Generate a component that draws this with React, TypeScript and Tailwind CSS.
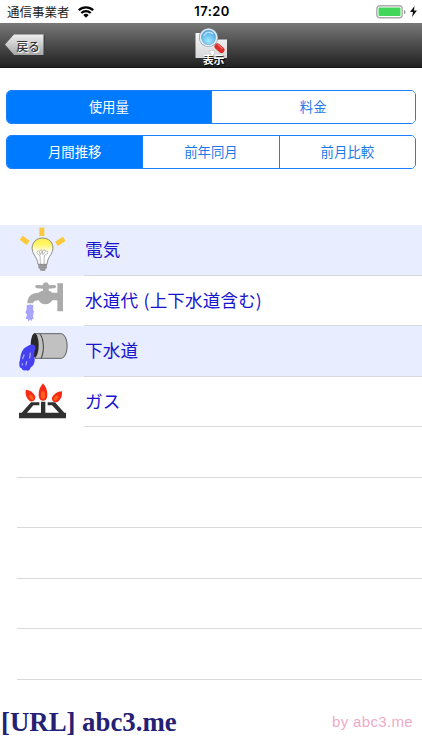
import React, { useState } from 'react';

interface SegmentedProps {
    options: string[];
    selected: number;
    onSelect: (index: number) => void;
}

const SegmentedControl: React.FC<SegmentedProps> = ({ options, selected, onSelect }) => (
    <div className="flex h-[34px] w-full overflow-hidden rounded-[5px] border border-[#1b7ffb]">
        {options.map((option, index) => (
            <button
                key={option}
                onClick={() => onSelect(index)}
                className={`flex-1 pb-[2px] text-[13.4px] leading-[30px] ${index > 0 ? 'border-l border-[#1b7ffb]' : ''} ${selected === index ? 'bg-[#007aff] text-white' : 'bg-white text-[#1b7ae8]'}`}
            >
                {option}
            </button>
        ))}
    </div>
);

const BulbIcon = () => (
    <svg width="70" height="50" viewBox="0 15 210 150" fill="none">
        <defs>
            <linearGradient id="bulb" x1="0" y1="0" x2="0" y2="1">
                <stop offset="0" stopColor="#fff04a" />
                <stop offset="0.25" stopColor="#fff56a" />
                <stop offset="0.55" stopColor="#ffffff" />
            </linearGradient>
        </defs>
        <g fill="#fcc938">
            <rect x="88" y="23" width="15" height="25" />
            <rect x="-13" y="-7.5" width="26" height="15" transform="translate(44 61) rotate(36)" />
            <rect x="-14" y="-7.5" width="28" height="15" transform="translate(151 64) rotate(-32)" />
        </g>
        <path d="M84 133c-1-14-7-21-12-30-15-24 1-49 26-49s40 25 25 49c-6 9-11 16-12 30z" fill="url(#bulb)" stroke="#77776f" strokeWidth="2.5" />
        <path d="M91 132l-1-25-7-5c-5-7 1-12 6-8 3-7 8-5 9 0 2-5 8-6 9 0 5-4 9 3 4 8l-8 5-1 25M88 96l3 8 5-10 3 10 6-9" stroke="#888" strokeWidth="1.8" />
        <path d="M85 133h26v10l-4 4-2 5H92l-3-5-4-4z" fill="#8c8c91" />
        <path d="M85 139h26M88 146h20" stroke="#b8b8bd" strokeWidth="2" />
    </svg>
);

const FaucetIcon = () => (
    <svg width="70" height="50" viewBox="0 10 210 150">
        <path d="M142 32h17v84h-17V83h-15c-3 7-11 12-21 12s-17-5-20-12c-9 0-16 3-17 9H52c0-20 13-32 34-32 3-3 7-5 13-6v-6l-18-1c-7-2-7-9 0-10l17 1c2-12 17-12 19 0l16-1c7 1 7 8 0 10l-17 1v6c5 1 8 3 10 6h16z" fill="#ababab" />
        <path d="M50 96l8 1 2-3 4 3 6 0-1 15 3 4-3 13 2 9-4 1-3 7-4-6-4 7-3-8-6 0 4-13-5-7 4-9z" fill="#a6a3ff" />
        <path d="M61 99l-2 17 3 7-1 10" stroke="#b9b7ff" strokeWidth="1.5" fill="none" />
    </svg>
);

const PipeIcon = () => (
    <svg width="70" height="50" viewBox="0 6 210 150">
        <path d="M74 29h81c22 6 22 68 0 74H76z" fill="#c1c1c2" stroke="#4a4a4d" strokeWidth="2.5" />
        <ellipse cx="74" cy="64" rx="12" ry="36" fill="#292929" />
        <path d="M89 29c14 14 14 59 4 74" stroke="#3a3a3a" strokeWidth="3" fill="none" />
        <path d="M63 62c7-2 14 3 14 9-3 8-4 13-5 24 5 12 1 30-9 34-3 9-10 14-15 9-5 4-11 1-13-5-9-1-8-18-5-25 2-14 4-30 17-38 5-4 10-7 16-8z" fill="#4540f0" />
        <g stroke="#aeb3ff" strokeWidth="3.5" strokeLinecap="round" fill="none">
            <path d="M42 93l-4 11" />
            <path d="M50 113l-2 10" />
            <path d="M61 87l-2 15" />
            <path d="M37 119v4" />
        </g>
    </svg>
);

const BurnerIcon = () => (
    <svg width="70" height="50" viewBox="0 5 210 150">
        <g fill="#f52b16">
            <path d="M0-26C9-15 13-6 13 7 13 19 9 26 0 26S-13 19-13 7C-13-6-9-15 0-26z" transform="translate(99 50)" />
            <path d="M0-23C10-13 13-4 11 9 8 20-8 20-11 9-13-4-10-13 0-23z" transform="translate(61 62) rotate(-36)" />
            <path d="M0-23C10-13 13-4 11 9 8 20-8 20-11 9-13-4-10-13 0-23z" transform="translate(141 65) rotate(40)" />
        </g>
        <g fill="#ff601b">
            <ellipse cx="99" cy="59" rx="6" ry="12" />
            <ellipse cx="64" cy="66" rx="5" ry="9" transform="rotate(-36 64 66)" />
            <ellipse cx="138" cy="68" rx="5" ry="9" transform="rotate(40 138 68)" />
        </g>
        <path d="M27 112h8l28-31h25v9H70l-19 22h42V79h13v33h41l-21-22h-13v-9h22l28 31h5v17H27z" fill="#303030" />
    </svg>
);

const SearchFolderIcon = () => (
    <svg width="36" height="44" viewBox="192 23 36 44">
        <defs>
            <radialGradient id="lens" cx="0.5" cy="0.7" r="0.7">
                <stop offset="0" stopColor="#9fe8ff" />
                <stop offset="1" stopColor="#3c9bdd" />
            </radialGradient>
            <linearGradient id="paper" x1="0" y1="0" x2="0" y2="1">
                <stop offset="0" stopColor="#f7f7f7" />
                <stop offset="1" stopColor="#d6d6d9" />
            </linearGradient>
        </defs>
        <path d="M194.5 33h14l2 6.5h15.5v18.5h-31.5z" fill="url(#paper)" />
        <path d="M208 51l5-1 1 3-3 3z" fill="#fff" stroke="#b9b9b9" strokeWidth="0.6" />
        <path d="M213.5 43.500l3 3" stroke="#d9dce0" strokeWidth="3" />
        <path d="M216.5 46.500l4 3.500" stroke="#db2e29" strokeWidth="6" strokeLinecap="round" />
        <path d="M217 44.500l4 4" stroke="#f36d66" strokeWidth="1.4" strokeLinecap="round" />
        <circle cx="207.5" cy="37.5" r="8.4" fill="url(#lens)" stroke="#7b98b0" strokeWidth="2.4" />
        <circle cx="207.5" cy="37.5" r="8.2" fill="none" stroke="#e4edf4" strokeWidth="1.6" />
        <path d="M203 36c1-4 6-5 9-2" stroke="#b7e1fa" strokeWidth="1.5" fill="none" />
    </svg>
);

const StatusBar = () => (
    <div className="grid h-[23px] grid-cols-3 items-center pl-[7px] pr-[5px] text-black">
        <div className="flex items-center gap-2">
            <span className="text-[12.5px] leading-[23px] text-[#222]">通信事業者</span>
            <svg width="16" height="12" viewBox="0 0 16 12" fill="none" stroke="#000" strokeWidth="2.2">
                <path d="M0.8 4.3a10.2 10.2 0 0 1 14.4 0" />
                <path d="M3.3 7a6.7 6.7 0 0 1 9.4 0" />
                <path d="M5.3 9a3.8 3.8 0 0 1 5.4 0L8 11.8z" fill="#000" stroke="none" />
            </svg>
        </div>
        <span className="text-center font-['Inter'] text-[13px] font-semibold leading-[23px] tracking-[0.4px]">17:20</span>
        <div className="flex items-center justify-end gap-1">
            <svg width="30" height="14" viewBox="0 0 30 14">
                <rect x="0.8" y="0.8" width="25.4" height="12" rx="3" fill="#fff" stroke="#aaa" strokeWidth="1.4" />
                <rect x="2.5" y="2.5" width="22" height="8.6" rx="1" fill="#42d65b" />
                <path d="M28 5c2 0 2 4 0 4z" fill="#999" />
            </svg>
            <svg width="7" height="11" viewBox="0 0 7 11">
                <path d="M4.5 0L0 6h3L2 11l5-6.5H4z" fill="#111" />
            </svg>
        </div>
    </div>
);

const NavBar = () => (
    <header className="grid h-[45px] grid-cols-3 bg-linear-to-b from-[#797979] to-[#222222] border-b border-[#151515]">
        <button className="relative ml-1 mt-[10px] h-[24px] w-[42px]">
            <svg className="absolute inset-0" width="42" height="24" viewBox="0 0 42 24">
                <defs>
                    <linearGradient id="back" x1="0" y1="0" x2="0" y2="1">
                        <stop offset="0" stopColor="#eeeeee" />
                        <stop offset="1" stopColor="#a7a7a7" />
                    </linearGradient>
                </defs>
                <path d="M2 12.5L11 2.5H41V23.5H11z" fill="#333" opacity="0.6" />
                <path d="M1 11.5L10 1.5H39.5V22H10z" fill="url(#back)" />
            </svg>
            <span className="relative block pl-[6px] pt-[2px] text-[11.8px] font-medium leading-[20px] text-[#333] [text-shadow:1px_1px_0_#fff]">戻る</span>
        </button>
        <div className="relative flex justify-center">
            <SearchFolderIcon />
            <span className="absolute left-[62px] top-[29px] text-[10.8px] font-bold leading-[14px] text-white [text-shadow:1px_1px_1px_#000]">表示</span>
        </div>
    </header>
);

const utilities = [
    { label: '電気', icon: <BulbIcon /> },
    { label: '水道代 (上下水道含む)', icon: <FaucetIcon /> },
    { label: '下水道', icon: <PipeIcon /> },
    { label: 'ガス', icon: <BurnerIcon /> },
];

const App: React.FC = () => {
    const [mode, setMode] = useState(0);
    const [period, setPeriod] = useState(0);

    return (
        <div className="flex h-[750px] w-[422px] flex-col overflow-hidden bg-white font-['Noto_Sans_CJK_JP',sans-serif]">
            <StatusBar />
            <NavBar />

            <div className="flex flex-col gap-[11px] px-[6px] pt-[22px]">
                <SegmentedControl options={['使用量', '料金']} selected={mode} onSelect={setMode} />
                <SegmentedControl options={['月間推移', '前年同月', '前月比較']} selected={period} onSelect={setPeriod} />
            </div>

            <ul className="mt-[56px]">
                {utilities.map((item, index) => (
                    <li key={item.label} className={`flex h-[50.5px] pl-[10px] ${index % 2 === 0 ? 'bg-[#e8edff]' : 'bg-white'}`}>
                        <div className="w-[74px] shrink-0">{item.icon}</div>
                        <div className="flex-1 border-b border-[#d8d8df] pl-px text-[17.6px] leading-[47.5px] tracking-[0.1px] text-[#1714d0] [word-spacing:1.5px]">{item.label}</div>
                    </li>
                ))}
                {[0, 1, 2, 3, 4].map((row) => (
                    <li key={row} className="ml-[17px] h-[50.5px] border-b border-[#d9d9dc]" />
                ))}
            </ul>

            <footer className="mt-auto flex h-[56px] items-center justify-between pl-px pr-[9px]">
                <span className="font-['Liberation_Serif',serif] text-[26.8px] font-bold leading-none text-[#242174]">[URL] abc3.me</span>
                <span className="pb-px font-['Liberation_Sans',sans-serif] text-[15px] leading-none tracking-[0.35px] text-[#efabc8]">by abc3.me</span>
            </footer>
        </div>
    );
};

export default App;
